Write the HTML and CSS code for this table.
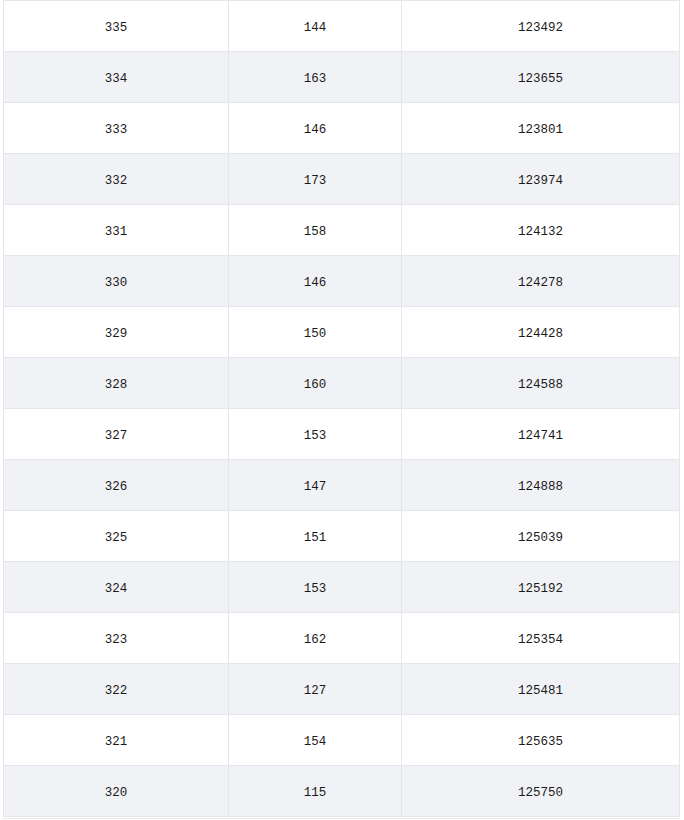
FILE: index.html
```html
<!DOCTYPE html>
<html>
<head>
<meta charset="utf-8">
<link rel="stylesheet" href="styles.css">
</head>
<body>
<div class="wrap">
  <div class="table">
    <div class="row"><div class="cell">335</div><div class="cell">144</div><div class="cell">123492</div></div>
    <div class="row alt"><div class="cell">334</div><div class="cell">163</div><div class="cell">123655</div></div>
    <div class="row"><div class="cell">333</div><div class="cell">146</div><div class="cell">123801</div></div>
    <div class="row alt"><div class="cell">332</div><div class="cell">173</div><div class="cell">123974</div></div>
    <div class="row"><div class="cell">331</div><div class="cell">158</div><div class="cell">124132</div></div>
    <div class="row alt"><div class="cell">330</div><div class="cell">146</div><div class="cell">124278</div></div>
    <div class="row"><div class="cell">329</div><div class="cell">150</div><div class="cell">124428</div></div>
    <div class="row alt"><div class="cell">328</div><div class="cell">160</div><div class="cell">124588</div></div>
    <div class="row"><div class="cell">327</div><div class="cell">153</div><div class="cell">124741</div></div>
    <div class="row alt"><div class="cell">326</div><div class="cell">147</div><div class="cell">124888</div></div>
    <div class="row"><div class="cell">325</div><div class="cell">151</div><div class="cell">125039</div></div>
    <div class="row alt"><div class="cell">324</div><div class="cell">153</div><div class="cell">125192</div></div>
    <div class="row"><div class="cell">323</div><div class="cell">162</div><div class="cell">125354</div></div>
    <div class="row alt"><div class="cell">322</div><div class="cell">127</div><div class="cell">125481</div></div>
    <div class="row"><div class="cell">321</div><div class="cell">154</div><div class="cell">125635</div></div>
    <div class="row alt"><div class="cell">320</div><div class="cell">115</div><div class="cell">125750</div></div>
  </div>
  <div class="footer-line"></div>
</div>
</body>
</html>
```
FILE: styles.css
```css
html, body {
  margin: 0;
  padding: 0;
  background: #ffffff;
}
.wrap {
  padding-left: 3px;
  width: 677px;
}
.table {
  border-right: 1px solid #e4e6eb;
  border-bottom: 1px solid #e4e6eb;
}
.row {
  display: grid;
  grid-template-columns: 225px 173px 278px;
  border-top: 1px solid #e4e6eb;
  height: 50px;
  background: #ffffff;
}
.row.alt {
  background: #f1f2f5;
}
.cell {
  border-left: 1px solid #e4e6eb;
  display: flex;
  align-items: center;
  justify-content: center;
  padding-top: 3px;
  font-family: "Liberation Mono", "DejaVu Sans Mono", monospace;
  font-size: 12.5px;
  color: #1a1a1a;
}
.footer-line {
  margin-top: 1px;
  height: 1px;
  background: #e4e6eb;
  width: 677px;
}
```
